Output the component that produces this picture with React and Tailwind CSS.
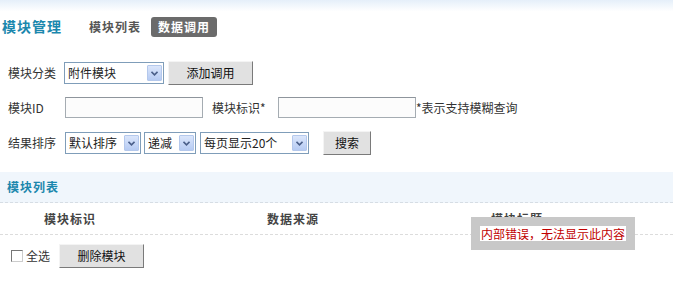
import React from "react";

const font = { fontFamily: '"Noto Sans CJK SC", "Liberation Sans", sans-serif' };

function Arrow() {
  return (
    <div className="absolute right-[1px] top-[2px] w-[15px] h-[16px] border border-[#b4c8ec] bg-gradient-to-b from-[#dbe6fb] to-[#b6cbf3] flex items-center justify-center rounded-[1px]">
      <svg width="7" height="5" viewBox="0 0 7 5">
        <path d="M0.5 0.8 L3.5 3.8 L6.5 0.8" fill="none" stroke="#4a5f8a" strokeWidth="1.6" />
      </svg>
    </div>
  );
}

function Select({ w, text }) {
  return (
    <div className={`relative h-[22px] border border-[#7f9db9] bg-white text-[12px] text-[#222] leading-[20px] pl-[3px] ${w}`}>
      {text}
      <Arrow />
    </div>
  );
}

function Btn({ w, text }) {
  return (
    <div className={`h-[24px] bg-[#e1e1e1] border-t border-l border-[#f4f4f4] border-r-[1px] border-b-[1px] border-r-[#7a7a7a] border-b-[#7a7a7a] text-[12px] text-[#111] leading-[22px] text-center ${w}`}>
      {text}
    </div>
  );
}

function Input({ w }) {
  return <div className={`h-[21px] border border-[#a5acb2] border-t-[#8e959c] bg-[#fcfcfc] ${w}`} />;
}

export default function App() {
  return (
    <div className="relative w-[673px] h-[290px] bg-white overflow-hidden text-[#333]" style={font}>
      <div className="h-[52px] bg-gradient-to-b from-[#e5eff9] via-white to-white via-[22%] flex items-center pl-[2px] pt-[1px]">
        <span className="text-[14px] font-bold text-[#1b87ad] tracking-[1px] w-[87px]">模块管理</span>
        <span className="text-[12px] font-bold text-[#555] tracking-[1px] w-[62px]">模块列表</span>
        <span className="text-[12px] font-bold text-white bg-[#6b6b6b] tracking-[1px] rounded-[3px] h-[20px] leading-[20px] w-[66px] text-center">数据调用</span>
      </div>

      <div className="flex items-center h-[24px] mt-[9px] text-[12px]">
        <span className="ml-[8px] w-[56px]">模块分类</span>
        <Select w="w-[100px]" text="附件模块" />
        <div className="ml-[4px]"><Btn w="w-[85px]" text="添加调用" /></div>
      </div>

      <div className="flex items-center h-[21px] mt-[12px] text-[12px]">
        <span className="ml-[8px] w-[57px]">模块ID</span>
        <Input w="w-[138px]" />
        <span className="ml-[9px] w-[66px]">模块标识*</span>
        <Input w="w-[138px]" />
        <span>*表示支持模糊查询</span>
      </div>

      <div className="flex items-center h-[24px] mt-[13px] text-[12px]">
        <span className="ml-[8px] w-[57px]">结果排序</span>
        <Select w="w-[76px]" text="默认排序" />
        <div className="ml-[3px]"><Select w="w-[52px]" text="递减" /></div>
        <div className="ml-[4px]"><Select w="w-[109px]" text="每页显示20个" /></div>
        <div className="ml-[14px]"><Btn w="w-[48px]" text="搜索" /></div>
      </div>

      <div className="mt-[17px] h-[31px] bg-[#f0f6fc] border-b border-dashed border-[#d6dde4] flex items-center pl-[7px]">
        <span className="text-[12px] font-bold tracking-[1px] text-[#1b87ad]">模块列表</span>
      </div>
      <div className="h-[32px] border-b border-dashed border-[#dcdcdc] flex items-center text-[12px] font-bold tracking-[1px] text-[#444]">
        <span className="w-[140px] text-center">模块标识</span>
        <span className="w-[306px] text-center">数据来源</span>
        <span className="w-[142px] text-center">模块标题</span>
      </div>

      <div className="flex items-center h-[26px] mt-[8px] text-[12px]">
        <div className="ml-[11px] w-[12px] h-[12px] border border-[#777] border-r-[#ccc] border-b-[#ccc] bg-white" />
        <span className="ml-[3px] w-[33px]">全选</span>
        <Btn w="w-[85px]" text="删除模块" />
      </div>

      <div className="absolute left-[471px] top-[217px] w-[164px] h-[33px] bg-[#c8c8c8] flex items-center justify-center">
        <span className="bg-white text-[#c00000] text-[12px] leading-[15px] px-[1px]">内部错误，无法显示此内容</span>
      </div>
    </div>
  );
}
